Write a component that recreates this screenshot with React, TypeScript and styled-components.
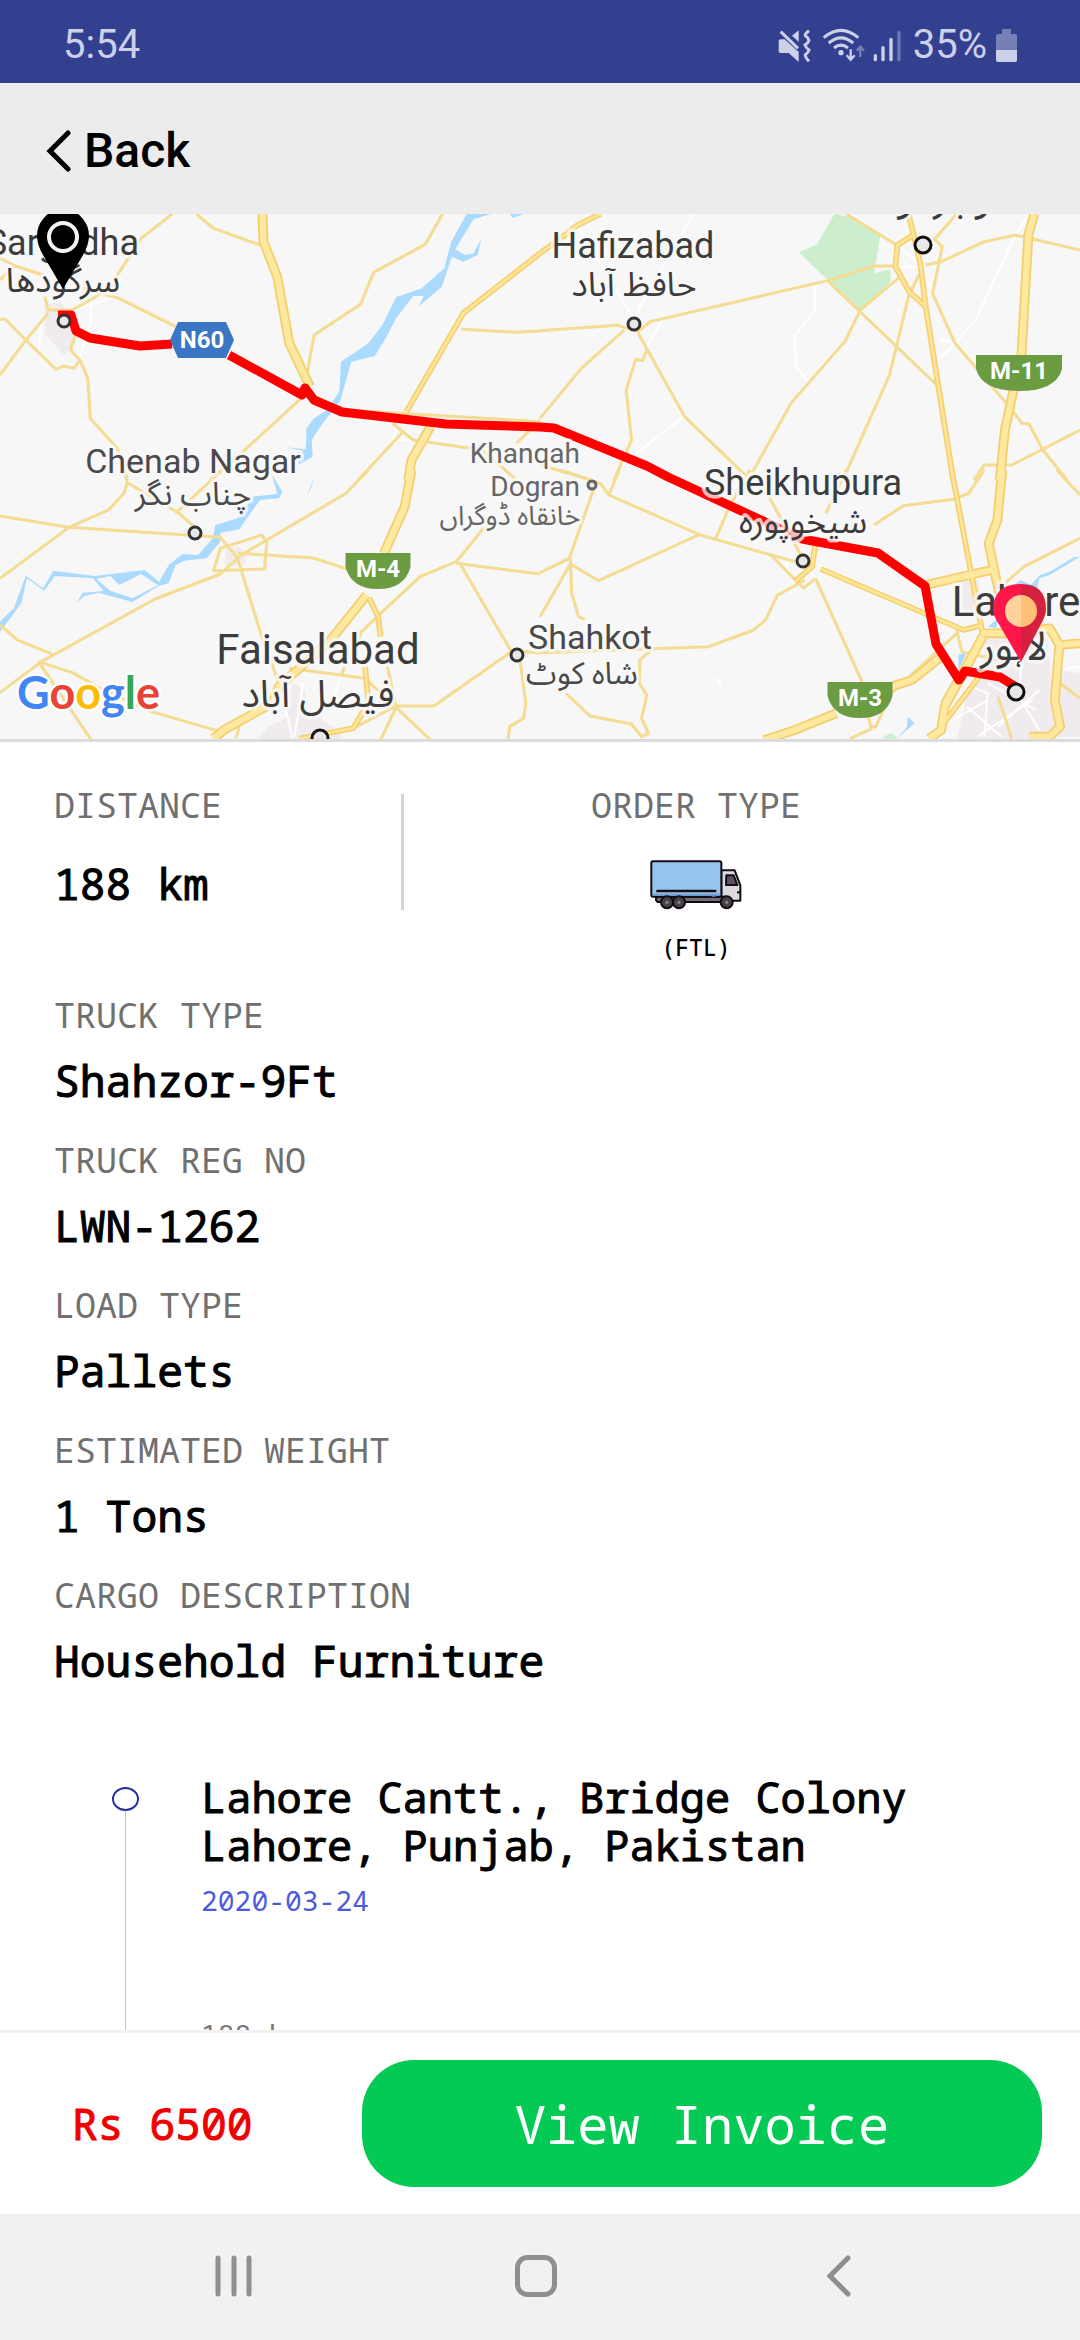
import React from "react";
import styled, { createGlobalStyle, css } from "styled-components";

const GlobalStyle = createGlobalStyle`
  * { box-sizing: border-box; }
  body { margin: 0; background: #fff; }
  button { font: inherit; border: 0; padding: 0; background: none; cursor: pointer; }
`;

const mono = `"Noto Sans Mono", "DejaVu Sans Mono", "Liberation Mono", monospace`;
const sans = `Roboto, "Noto Sans", "Liberation Sans", sans-serif`;

const Screen = styled.div`
  display: flex;
  flex-direction: column;
  height: 100vh;
  overflow: hidden;
  font-family: ${mono};
  color: #000;
`;

/* ---------- status bar ---------- */

const StatusBar = styled.div`
  display: flex;
  align-items: center;
  justify-content: space-between;
  flex: none;
  height: 83px;
  padding: 7px 63px 0 63px;
  background: #334090;
  color: #ccd0e8;
  font: 400 40px/48px ${sans};
`;

const StatusGroup = styled.div`
  display: flex;
  align-items: center;
  gap: 9px;
`;

/* ---------- header ---------- */

const Header = styled.header`
  display: flex;
  align-items: center;
  flex: none;
  height: 131px;
  padding: 4px 45px 0;
  background: #ececec;
`;

const BackButton = styled.button`
  display: flex;
  align-items: center;
  gap: 12px;
  color: #000;
  && { font: 500 48px/56px ${sans}; }
`;

/* ---------- map ---------- */

const MapFrame = styled.section`
  flex: none;
  height: 528px;
  border-bottom: 3px solid #dcdcdc;
  background: #f7f7f7;
  overflow: hidden;
  svg { display: block; width: 100%; height: 100%; }
`;

/* ---------- details ---------- */

const Details = styled.main`
  flex: 1;
  min-height: 0;
  overflow: hidden;
`;

const Summary = styled.section`
  display: grid;
  grid-template-columns: 401px 3px 584px;
  height: 232px;
  padding-top: 42px;
`;

const Label = styled.div`
  font-size: 35px;
  line-height: 42px;
  color: #707070;
`;

const strong = css`
  font-weight: 400;
  -webkit-text-stroke: 1px currentColor;
`;

const Value = styled.div`
  ${strong}
  font-size: 43px;
  line-height: 52px;
`;

const DistanceCell = styled.div`
  display: flex;
  flex-direction: column;
  gap: 32px;
  padding-left: 54px;
`;

const Divider = styled.div`
  height: 116px;
  margin-top: 10px;
  background: #d3d3d3;
`;

const OrderCell = styled.div`
  display: flex;
  flex-direction: column;
  align-items: center;
  svg { margin-top: 34px; }
`;

const OrderCode = styled.div`
  font-size: 23px;
  line-height: 30px;
  font-weight: 500;
  margin-top: 22px;
`;

const Fields = styled.section`
  display: flex;
  flex-direction: column;
  gap: 32px;
  padding: 20px 54px 0;
`;

const Field = styled.div`
  display: flex;
  flex-direction: column;
  gap: 19px;
`;

const Timeline = styled.section`
  display: grid;
  grid-template-columns: 28px 1fr;
  column-gap: 62px;
  padding: 86px 54px 0 111px;
`;

const Track = styled.div`
  display: flex;
  flex-direction: column;
  align-items: center;
  padding-top: 14px;
`;

const Dot = styled.span`
  width: 27px;
  height: 24px;
  border: 2px solid #2b2fa0;
  border-radius: 50%;
`;

const Rail = styled.span`
  flex: 1;
  width: 1px;
  background: #c4c4c4;
`;

const Address = styled.div`
  ${strong}
  font-size: 42px;
  line-height: 48px;
`;

const Meta = styled.div<{ $tone: string; $gap: number }>`
  margin-top: ${(p) => p.$gap}px;
  font-size: 28px;
  line-height: 34px;
  color: ${(p) => p.$tone};
`;

/* ---------- footer ---------- */

const Footer = styled.footer`
  display: flex;
  align-items: center;
  justify-content: space-between;
  flex: none;
  height: 184px;
  padding: 0 38px 0 72px;
  border-top: 3px solid #f1f1f1;
`;

const Price = styled.div`
  ${strong}
  font-size: 43px;
  line-height: 52px;
  color: #f00000;
`;

const InvoiceButton = styled.button`
  width: 680px;
  height: 127px;
  border-radius: 52px;
  && {
    background: #02ca54;
    font: 400 52px/60px ${mono};
    color: #fff;
  }
`;

const NavBar = styled.nav`
  display: flex;
  justify-content: space-between;
  align-items: center;
  flex: none;
  height: 126px;
  padding: 0 210px 2px 201px;
  background: #f1f1f1;
  color: #8f8f8f;
`;

const NavButton = styled.button`
  display: flex;
  justify-content: center;
  width: 64px;
  color: inherit;
`;

/* ---------- icons ---------- */

const StatusIcons = () => (
  <svg width="126" height="37" viewBox="55 40 378 111" fill="none" stroke="#ccd0e8" strokeWidth="9" aria-hidden="true">
    <path d="M63 77h12l42 38v30L87 118H63q-6 0-6-6V83q0-6 6-6z" fill="#ccd0e8" stroke="none" />
    <path d="M63 54l52 50" />
    <path d="M117 50v34L97 66z" fill="#ccd0e8" stroke="none" />
    <path d="M148 51q-14 10-11 15 9 7 11 14-2 7-12 14 2 8 12 15-2 8-11 14 0 8 11 20" />
    <path d="M192 72q52-44 104 0M207 88q37-31 74 0M223 103q21-17 42 0" />
    <circle cx="244" cy="117" r="8" fill="#ccd0e8" stroke="none" />
    <path d="M273 107v30M261 125l12 13 12-13" strokeWidth="7" />
    <path d="M302 130v-28M291 111l11-12 11 12" stroke="#7681b8" strokeWidth="7" />
    <path d="M347 126v12M370 102v36M394 77v61" strokeWidth="10" strokeLinecap="round" />
    <path d="M418 56v82" stroke="#6c76b1" strokeWidth="10" strokeLinecap="round" />
  </svg>
);

const BatteryIcon = () => (
  <svg width="21" height="33" viewBox="0 0 21 33" aria-hidden="true">
    <path d="M6 0h9v5h4q2 0 2 2v15H0V7q0-2 2-2h4z" fill="#7680b7" />
    <path d="M0 21h21v10q0 2-2 2H2q-2 0-2-2z" fill="#ccd0e8" />
  </svg>
);

const TruckIcon = () => (
  <svg width="92" height="50" viewBox="89 60 276 150" stroke="#120d12" strokeWidth="6" strokeLinejoin="round" aria-hidden="true">
    <path d="M303 91h40l17 45v46h-57z" fill="#dcdadd" />
    <path d="M318 106h22l11 29h-34z" fill="#5d5161" />
    <path d="M107 170h212v16H112l-5-6z" fill="#75697a" />
    <rect x="93" y="64" width="210" height="106" rx="5" fill="#98c4f0" />
    <path d="M108 153h180" strokeWidth="8" />
    <path d="M97 163h203" stroke="#77a5d6" strokeWidth="5" />
    <path d="M274 168h12" stroke="#4f8cc9" strokeWidth="5" />
    <path d="M350 157h9" />
    {[140, 176, 319].map((x) => (
      <g key={x}>
        <circle cx={x} cy="187" r="18" fill="#4a404c" />
        <circle cx={x} cy="187" r="5" fill="#8b7e8e" stroke="none" />
      </g>
    ))}
  </svg>
);

/* ---------- map drawing ---------- */

type Tile = { x: number; y: number; d: string };
const NW = { x: 0, y: -4 };
const NE = { x: 540, y: -4 };
const SW = { x: 0, y: 256 };
const SE = { x: 540, y: 256 };

const TilePaths = ({ tiles, ...rest }: { tiles: Tile[] } & React.SVGProps<SVGGElement>) => (
  <g {...rest}>
    {tiles.map((t, i) => (
      <path key={i} transform={`translate(${t.x} ${t.y}) scale(.3444 .3333)`} d={t.d} />
    ))}
  </g>
);

const urban: Tile[] = [
  { ...NW, d: "M130 285L175 275 215 330 220 400 185 435 130 370z" },
  { ...SW, d: "M655 240L690 228 715 250 712 285 655 290zM525 185L560 165 580 200zM745 810L780 770 830 745 850 640 885 660 895 720 980 780 1000 810z" },
  { ...SE, d: "M1225 330L1275 330 1275 440 1225 430zM1290 495L1470 480 1500 780 1440 810H1210L1240 680 1290 600zM1500 600L1568 610V800H1500z" },
];

const parks: Tile[] = [
  { ...NE, d: "M855 12L900 20 988 78 970 190 1018 178V215L930 300 835 210 752 127 805 102z" },
  { ...SE, d: "M998 800L1020 788 1040 806H998z" },
];

const water: Tile[] = [
  { ...NW, d: "M1355 12H1425L1375 28 1322 118 1350 135 1375 130 1398 85 1387 135 1345 155 1312 140 1283 230 1217 288 1230 258 1200 258 1150 325 1120 385 1088 438 1020 455 988 572 930 650 905 690 908 740 865 765 880 722 830 712 888 718 890 655 912 625 950 600 985 545 990 455 1070 400 1110 345 1150 262 1225 235 1290 175 1310 95zM1480 12H1520L1490 24z" },
  { ...SW, d: "M790 15L820 65 810 85 755 90 720 140 695 178 640 188 640 215 600 265 535 272 510 285 490 340 460 348 385 396 285 368 245 378 222 400 240 368 300 363 270 325 160 318 128 362 78 325 62 400 0 485V455L40 415 75 317 125 355 155 302 275 318 420 300 462 335 490 285 530 252 575 255 618 205 625 165 690 145 735 80 805 72zM912 25L905 50 890 78z" },
  { ...SE, d: "M1568 260L1480 315 1450 325 1440 370 1370 350 1395 330 1425 345 1452 315 1480 305 1550 262zM1300 470L1330 445 1325 475zM1215 555L1240 545 1215 600zM1068 740L1088 760 1035 806 1065 772z" },
];
const islands: Tile[] = [{ ...SW, d: "M280 327L320 318 347 345 410 312 458 345 385 385 320 362z" }];

const minor: Tile[] = [
  { ...NW, d: "M0 145L45 168 125 195M0 210L40 170M500 12L410 85 335 205M570 12L620 55 755 105M1285 12L1235 103 1085 187 1047 283 912 375 892 490M240 235L345 265 510 350M345 215L270 265 210 300 140 300 130 260M0 328H15L75 390 162 478 185 468 215 475 232 450 205 420 220 370M140 310L75 390 0 495M232 450L255 505 262 625 340 715 370 810M880 560L700 730 610 810M1000 600L1568 635M1140 640L1200 690 1400 720 1500 810M1170 665L1040 810M1340 358L1500 367 1568 363M1568 630L1500 700" },
  { ...NE, d: "M890 12L1035 105M0 362L225 346 285 365 320 335 835 212 970 168H1040M1120 165L1165 155 1285 97 1380 75 1568 120M245 360L120 475 0 625M285 370L420 620 600 800M310 420L298 452 278 448 250 540 266 690 215 810M1210 12L1145 88 1168 110 1140 250 1205 400 1350 575 1400 640 1420 642 1460 720 1530 810M1040 205L930 300 885 395 730 578 615 790M835 212L1155 528M1100 195L1070 260 1015 495 890 785M1568 660L1370 765H1290L1260 810M0 765L150 810" },
  { ...SW, d: "M0 138L200 172 640 202 690 265 760 500 810 640M360 0L370 38 520 130 570 175M645 0L510 130M370 38L360 70 315 120 200 172 0 325M1070 0L1005 70 700 255 640 312 450 387 120 575 0 668M690 250L910 264 1010 298M640 235L760 195 775 215 768 297 620 302zM0 465L50 510 150 552M110 575L210 608 300 660 440 725 640 785M115 580L265 810M1420 155L1325 275 1220 320 1105 430 1050 485 1035 530M1325 280L1568 312M1335 280L1485 545 1260 708H1150L1025 775M1485 540L1568 550M1510 570L1527 700 1520 745 1480 770 1475 810M840 595L1060 625 1150 712 1250 810M1125 590L1150 712 1105 810M1000 590L990 620M685 805L695 770" },
  { ...SE, d: "M60 0L175 40 200 75 465 195 740 275M230 0L200 75M155 60L85 265 0 308M460 195L170 332 88 282 0 440M88 265L92 370 112 440 130 448M610 0L555 100 510 205M665 80L765 270M890 0L830 130M970 165L1055 107 1200 88 1245 70 1290 0M670 255L765 355 800 325M800 325L935 635 960 770 975 770 1020 670 1210 490M770 330L690 375 655 450 620 480 490 530 0 548M320 542L290 570 288 640 310 675 295 745 315 790 295 800 265 762 145 738 75 670M1568 205L1405 290 1350 340M1500 0L1568 75M1510 640L1568 685M900 806L965 775M1210 480L1225 545 1330 570M1330 680L1370 806" },
];

const lanes: Tile[] = [
  { ...NW, d: "M265 260V330L230 445M330 262L215 300M120 330L112 435M1150 650L1140 690 1195 690" },
  { ...NE, d: "M110 50L275 330 290 290 445 12M355 330L310 415M800 220L798 300 765 345 738 380 745 470 778 515M420 618L230 770M1415 20L1380 75 1265 330 1205 400 1150 455M1160 388L1205 400M1040 110L1090 150M1110 195L1140 240M1040 170H1110" },
  { ...SW, d: "M880 640L855 800M825 700L850 806M1010 165L1015 168M1000 590L970 680" },
  { ...SE, d: "M512 622L528 652M715 265L720 310M800 325L770 290M1230 640L1300 670 1290 800M1200 750L1300 690M1240 710L1340 800M1300 640L1440 720M1330 770L1450 660M1270 800L1430 690M1400 560L1390 680 1450 780M1510 600L1568 590" },
];

const trunk: Tile[] = [
  { ...NW, d: "M1568 130L1345 310 1180 605" },
  { ...NE, d: "M0 130L60 85 110 45 175 12M1070 12L1085 75 1105 165 1120 290 1200 810M1085 75L1038 105 1032 170 1072 245 1120 290" },
  { ...SW, d: "M1072 385L1098 440 1105 500M1060 590L1070 700 1025 775 870 806" },
  { ...SE, d: "M1195 0L1285 490M815 297L1230 480 1285 465M740 335L790 290 800 220M1285 490L1170 700M1290 600L1150 790" },
];

const motorway: Tile[] = [
  { ...NW, d: "M762 12L765 95 805 200 840 400 900 530M1250 650L1195 750 1185 810" },
  { ...NE, d: "M1435 12L1418 75 1398 435M1375 540L1350 660 1335 810" },
  { ...SW, d: "M1195 0L1175 110 1115 250M1065 375L960 510 810 650 790 700 650 780 620 806" },
  { ...SE, d: "M1342 0L1328 150 1303 220 1325 330 1350 440 1380 490 1480 475 1508 525 1495 690 1510 770 1480 800H1420M1120 345L1310 300M1285 490H1380M1510 525L1568 520M1285 500L1260 550 1175 710 1165 780 1130 806M1165 560L1080 630 1020 650M860 730L740 780 650 810" },
];

const route =
  "M58 101H71L76 117 90 124 140 132 172 130M229 141L302 181 305 174 314 186 342 198 446 210 540 213 554 214 647 252 668 263 802 325 878 339 925 372 936 430 959 466 965 457 1000 463 1016 473";

type PlaceProps = { x: number; y: number; size: number; anchor?: "start" | "middle" | "end"; tone?: string; children: string };
const Place = ({ x, y, size, anchor = "middle", tone = "#3c3c3c", children }: PlaceProps) => (
  <text x={x} y={y} fontSize={size} textAnchor={anchor} fill={tone} stroke="#f9f9f9" strokeOpacity=".75" strokeWidth="7" strokeLinejoin="round" paintOrder="stroke">
    {children}
  </text>
);

const Town = ({ x, y, r, tone = "#333" }: { x: number; y: number; r: number; tone?: string }) => (
  <circle cx={x} cy={y} r={r} fill="#e8e8e8" stroke={tone} strokeWidth="3" />
);

const Shield = ({ x, y, w, children }: { x: number; y: number; w: number; children: string }) => (
  <g>
    <path d={`M${x - w / 2} ${y}h${w}v14q-6 22-${w / 2} 22t-${w / 2}-22z`} fill="#6b9c42" />
    <text x={x} y={y + 24} fontSize="24" fontWeight="700" textAnchor="middle" fill="#fff">{children}</text>
  </g>
);

const RouteMap = () => (
  <svg viewBox="0 0 1080 525" preserveAspectRatio="xMidYMid slice" role="img" aria-label="Route map" fontFamily={`Roboto, "Noto Sans Arabic", "DejaVu Sans", sans-serif`}>
    <TilePaths tiles={urban} fill="#efebef" />
    <TilePaths tiles={parks} fill="#cdeecd" />
    <TilePaths tiles={water} fill="#abdaff" />
    <TilePaths tiles={islands} fill="#f7f7f7" />
    <TilePaths tiles={lanes} fill="none" stroke="#fff" strokeWidth="6" />
    <TilePaths tiles={minor} fill="none" stroke="#f4dc92" strokeWidth="9" strokeLinejoin="round" />
    <TilePaths tiles={trunk} fill="none" stroke="#f3cf70" strokeWidth="17" strokeLinejoin="round" />
    <TilePaths tiles={motorway} fill="none" stroke="#f4d072" strokeWidth="29" strokeLinejoin="round" />
    <TilePaths tiles={trunk} fill="none" stroke="#ffe595" strokeWidth="8" strokeLinejoin="round" />
    <TilePaths tiles={motorway} fill="none" stroke="#ffe8a0" strokeWidth="18" strokeLinejoin="round" />
    <path d={route} fill="none" stroke="#f00" strokeWidth="9" strokeLinejoin="round" />

    <path d="M178 108h48l8 18-8 18h-48l-8-18z" fill="#3a76c4" />
    <text x="202" y="134" fontSize="24" fontWeight="700" textAnchor="middle" fill="#fff">N60</text>
    <Shield x={1019} y={141} w={86}>M-11</Shield>
    <Shield x={378} y={339} w={65}>M-4</Shield>
    <Shield x={860} y={468} w={65}>M-3</Shield>

    <Place x={139} y={41} size={36} anchor="end">Sargodha</Place>
    <Place x={63} y={78} size={34}>سرگودها</Place>
    <Place x={633} y={44} size={36}>Hafizabad</Place>
    <Place x={634} y={82} size={34}>حافظ آباد</Place>
    <Place x={932} y={-3} size={40}>گوجرانوالہ</Place>
    <Place x={193} y={259} size={34} tone="#4a4a4a">Chenab Nagar</Place>
    <Place x={193} y={291} size={32} tone="#4a4a4a">چناب نگر</Place>
    <Place x={580} y={249} size={28} anchor="end" tone="#666">Khanqah</Place>
    <Place x={580} y={282} size={28} anchor="end" tone="#666">Dogran</Place>
    <Place x={510} y={311} size={27} tone="#666">خانقاہ ڈوگراں</Place>
    <Place x={803} y={281} size={36}>Sheikhupura</Place>
    <Place x={803} y={319} size={34}>شیخوپورہ</Place>
    <Place x={318} y={450} size={42}>Faisalabad</Place>
    <Place x={318} y={493} size={38}>فیصل آباد</Place>
    <Place x={528} y={435} size={34} anchor="start" tone="#4a4a4a">Shahkot</Place>
    <Place x={582} y={470} size={31} tone="#4a4a4a">شاہ کوٹ</Place>
    <Place x={1016} y={402} size={42}>Lahore</Place>
    <Place x={1014} y={446} size={40}>لاہور</Place>

    <Town x={64} y={107} r={6} />
    <Town x={634} y={110} r={6} />
    <Town x={923} y={31} r={8} tone="#111" />
    <Town x={195} y={319} r={6} />
    <Town x={592} y={271} r={4} tone="#666" />
    <Town x={803} y={347} r={6} />
    <Town x={517} y={441} r={6} />
    <Town x={1016} y={478} r={8} tone="#111" />
    <Town x={320} y={524} r={8} tone="#111" />

    <path d="M63 75L43 41Q31 20 43 5 52-6 63-6T83 5Q95 20 83 41z" fill="#000" />
    <circle cx="63" cy="23" r="14" fill="none" stroke="#f4f4f4" strokeWidth="4" />

    <path d="M1021 448L1000 412Q993 402 993 395 994 370 1021 370z" fill="#ff174a" />
    <path d="M1021 448L1040 412Q1046 402 1046 395 1046 370 1021 370z" fill="#d6203f" />
    <path d="M1021 381a16 16 0 0 0 0 32z" fill="#ffd39b" />
    <path d="M1021 381a16 16 0 0 1 0 32z" fill="#ffc077" />

    <text x="17" y="495" fontSize="45" fontFamily="Lato, sans-serif" fontWeight="700" stroke="#fff" strokeWidth="5" strokeLinejoin="round" paintOrder="stroke">
      <tspan fill="#4285f4">G</tspan>
      <tspan fill="#ea4335">o</tspan>
      <tspan fill="#fbbc05">o</tspan>
      <tspan fill="#4285f4">g</tspan>
      <tspan fill="#34a853">l</tspan>
      <tspan fill="#ea4335">e</tspan>
    </text>
  </svg>
);

/* ---------- screen ---------- */

const fields = [
  { label: "TRUCK TYPE", value: "Shahzor-9Ft" },
  { label: "TRUCK REG NO", value: "LWN-1262" },
  { label: "LOAD TYPE", value: "Pallets" },
  { label: "ESTIMATED WEIGHT", value: "1 Tons" },
  { label: "CARGO DESCRIPTION", value: "Household Furniture" },
];

export default function App() {
  return (
    <Screen>
      <GlobalStyle />
      <StatusBar>
        <span>5:54</span>
        <StatusGroup>
          <StatusIcons />
          <span>35%</span>
          <BatteryIcon />
        </StatusGroup>
      </StatusBar>

      <Header>
        <BackButton type="button">
          <svg width="27" height="42" viewBox="0 0 27 42" fill="none" stroke="currentColor" strokeWidth="5" strokeLinecap="round" aria-hidden="true">
            <path d="M23 3L5 21l18 18" />
          </svg>
          Back
        </BackButton>
      </Header>

      <MapFrame>
        <RouteMap />
      </MapFrame>

      <Details>
        <Summary>
          <DistanceCell>
            <Label>DISTANCE</Label>
            <Value>188 km</Value>
          </DistanceCell>
          <Divider />
          <OrderCell>
            <Label>ORDER TYPE</Label>
            <TruckIcon />
            <OrderCode>(FTL)</OrderCode>
          </OrderCell>
        </Summary>

        <Fields>
          {fields.map((f) => (
            <Field key={f.label}>
              <Label>{f.label}</Label>
              <Value>{f.value}</Value>
            </Field>
          ))}
        </Fields>

        <Timeline>
          <Track>
            <Dot />
            <Rail />
          </Track>
          <div>
            <Address>
              Lahore Cantt., Bridge Colony
              <br />
              Lahore, Punjab, Pakistan
            </Address>
            <Meta $tone="#4a5be0" $gap={14}>2020-03-24</Meta>
            <Meta $tone="#777" $gap={100}>188 km</Meta>
          </div>
        </Timeline>
      </Details>

      <Footer>
        <Price>Rs 6500</Price>
        <InvoiceButton type="button">View Invoice</InvoiceButton>
      </Footer>

      <NavBar>
        <NavButton type="button" aria-label="Recent apps">
          <svg width="37" height="42" viewBox="0 0 37 42" stroke="currentColor" strokeWidth="5" strokeLinecap="round" aria-hidden="true">
            <path d="M3 3v36M19 3v36M34 3v36" />
          </svg>
        </NavButton>
        <NavButton type="button" aria-label="Home">
          <svg width="42" height="42" viewBox="0 0 42 42" fill="none" stroke="currentColor" strokeWidth="5" aria-hidden="true">
            <rect x="2.5" y="2.5" width="37" height="37" rx="10" />
          </svg>
        </NavButton>
        <NavButton type="button" aria-label="Back">
          <svg width="25" height="42" viewBox="0 0 25 42" fill="none" stroke="currentColor" strokeWidth="5" strokeLinecap="round" aria-hidden="true">
            <path d="M22 3L4 21l18 18" />
          </svg>
        </NavButton>
      </NavBar>
    </Screen>
  );
}
